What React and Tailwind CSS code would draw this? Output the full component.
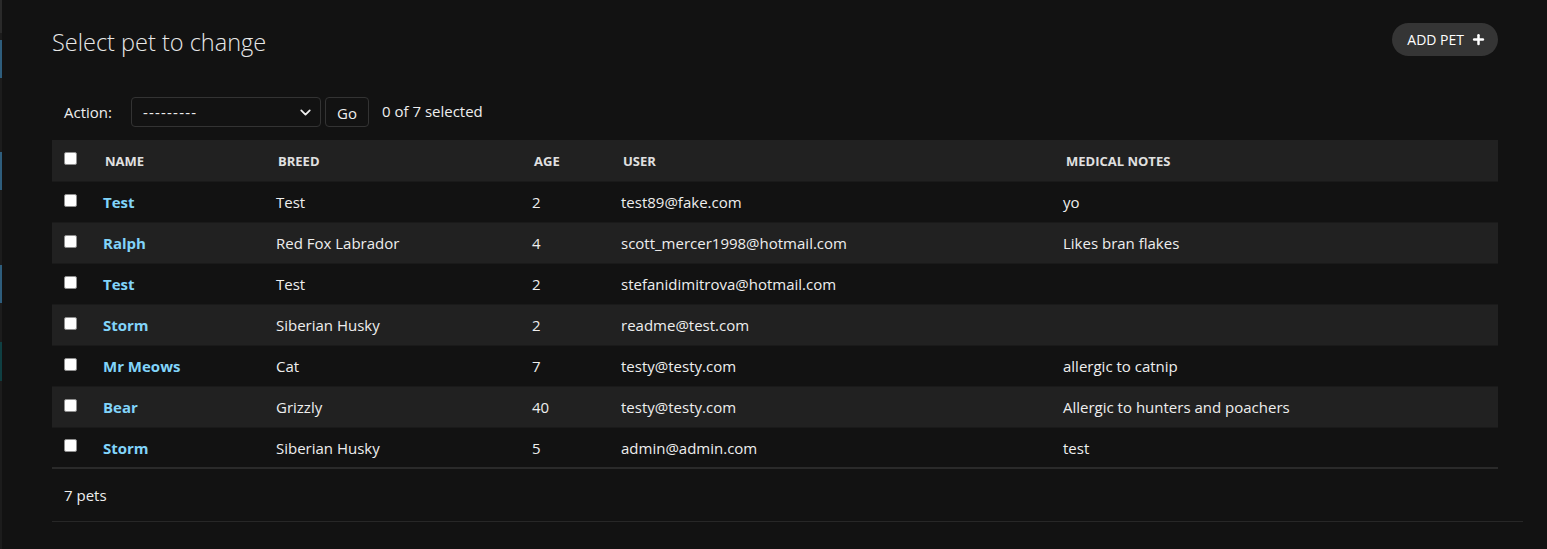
import { ChevronDown, Plus } from "lucide-react";

const pets = [
  { name: "Test", breed: "Test", age: "2", user: "test89@fake.com", notes: "yo" },
  { name: "Ralph", breed: "Red Fox Labrador", age: "4", user: "scott_mercer1998@hotmail.com", notes: "Likes bran flakes" },
  { name: "Test", breed: "Test", age: "2", user: "stefanidimitrova@hotmail.com", notes: "" },
  { name: "Storm", breed: "Siberian Husky", age: "2", user: "readme@test.com", notes: "" },
  { name: "Mr Meows", breed: "Cat", age: "7", user: "testy@testy.com", notes: "allergic to catnip" },
  { name: "Bear", breed: "Grizzly", age: "40", user: "testy@testy.com", notes: "Allergic to hunters and poachers" },
  { name: "Storm", breed: "Siberian Husky", age: "5", user: "admin@admin.com", notes: "test" },
];

const Box = () => (
  <span className="mt-[-5px] block h-[13px] w-[13px] rounded-[2px] border border-[#8f8f8f] bg-white" />
);

const App = () => {
  return (
    <div className="flex min-h-[549px] bg-[#121212] font-['Open_Sans',sans-serif] text-[#eeeeee]">
      {/* edge of the collapsed sidebar */}
      <div className="flex w-[2px] flex-col bg-[#1c1c1c]">
        <div className="h-[33px] bg-[#2a2a2a]" />
        <div className="mt-[7px] h-[38px] bg-[#2e5d7c]" />
        <div className="mt-[74px] h-[38px] bg-[#2e5d7c]" />
        <div className="mt-[75px] h-[38px] bg-[#2e5d7c]" />
        <div className="mt-[39px] h-[39px] bg-[#0f3f42]" />
      </div>

      <main className="flex-1 pl-[50px] pr-[24px]">
        <div className="flex items-start justify-between pr-[25px] pt-[23px]">
          <h1 className="mt-[2px] text-[23.5px] font-light leading-[34px] text-[#e8e8e8]">
            Select pet to change
          </h1>
          <button className="flex h-[33px] items-center gap-[7px] rounded-full bg-[#353535] pl-[15px] pr-[12px] text-[14px] text-white">
            ADD PET
            <Plus size={15} strokeWidth={4} />
          </button>
        </div>

        <div className="mt-[38px] flex h-[30px] items-center pl-[12px] text-[15px]">
          <span className="mr-[19px] mt-[1px]">Action:</span>
          <div className="flex h-[30px] w-[190px] items-center justify-between rounded-[4px] border border-[#333333] pl-[11px] pr-[6px]">
            <span className="tracking-[1.2px]">---------</span>
            <ChevronDown size={17} strokeWidth={2.5} />
          </div>
          <button className="ml-[4px] flex h-[30px] w-[44px] items-center justify-center rounded-[4px] border border-[#333333] pt-[3px]">
            Go
          </button>
          <span className="ml-[13px] -mt-[2px]">0 of 7 selected</span>
        </div>

        <div className="mt-[13px] border-b border-[#272727]">
          <table className="w-[calc(100%-25px)] table-fixed border-collapse text-left text-[15px]">
            <colgroup>
              <col className="w-[41px]" />
              <col className="w-[173px]" />
              <col className="w-[256px]" />
              <col className="w-[89px]" />
              <col className="w-[442px]" />
              <col />
            </colgroup>
            <thead>
              <tr className="h-[41px] bg-[#212121] text-[13px] font-bold uppercase text-[#e0e0e0]">
                <th className="pl-[12px] pt-[2px]">
                  <Box />
                </th>
                <th className="pl-[12px] pt-[2px]">Name</th>
                <th className="pl-[12px] pt-[2px]">Breed</th>
                <th className="pl-[12px] pt-[2px]">Age</th>
                <th className="pl-[12px] pt-[2px]">User</th>
                <th className="pl-[13px] pt-[2px]">Medical notes</th>
              </tr>
            </thead>
            <tbody>
              {pets.map((pet, i) => (
                <tr
                  key={i}
                  className={`h-[41px] border-t border-[#1a1a1a] ${
                    i % 2 === 1 ? "bg-[#212121]" : "bg-[#121212]"
                  } ${i === pets.length - 1 ? "border-b-2 border-b-[#2a2a2a]" : ""}`}
                >
                  <td className="pl-[12px] pt-[2px]">
                    <Box />
                  </td>
                  <td className="pl-[10px] pt-[2px] font-bold text-[#81d4fa]">{pet.name}</td>
                  <td className="pl-[10px] pt-[2px]">{pet.breed}</td>
                  <td className="pl-[10px] pt-[2px]">{pet.age}</td>
                  <td className="pl-[10px] pt-[2px]">{pet.user}</td>
                  <td className="pl-[10px] pt-[2px]">{pet.notes}</td>
                </tr>
              ))}
            </tbody>
          </table>
          <p className="h-[52px] pl-[12px] pt-[15px] text-[15px]">7 pets</p>
        </div>
      </main>
    </div>
  );
};

export default App;
